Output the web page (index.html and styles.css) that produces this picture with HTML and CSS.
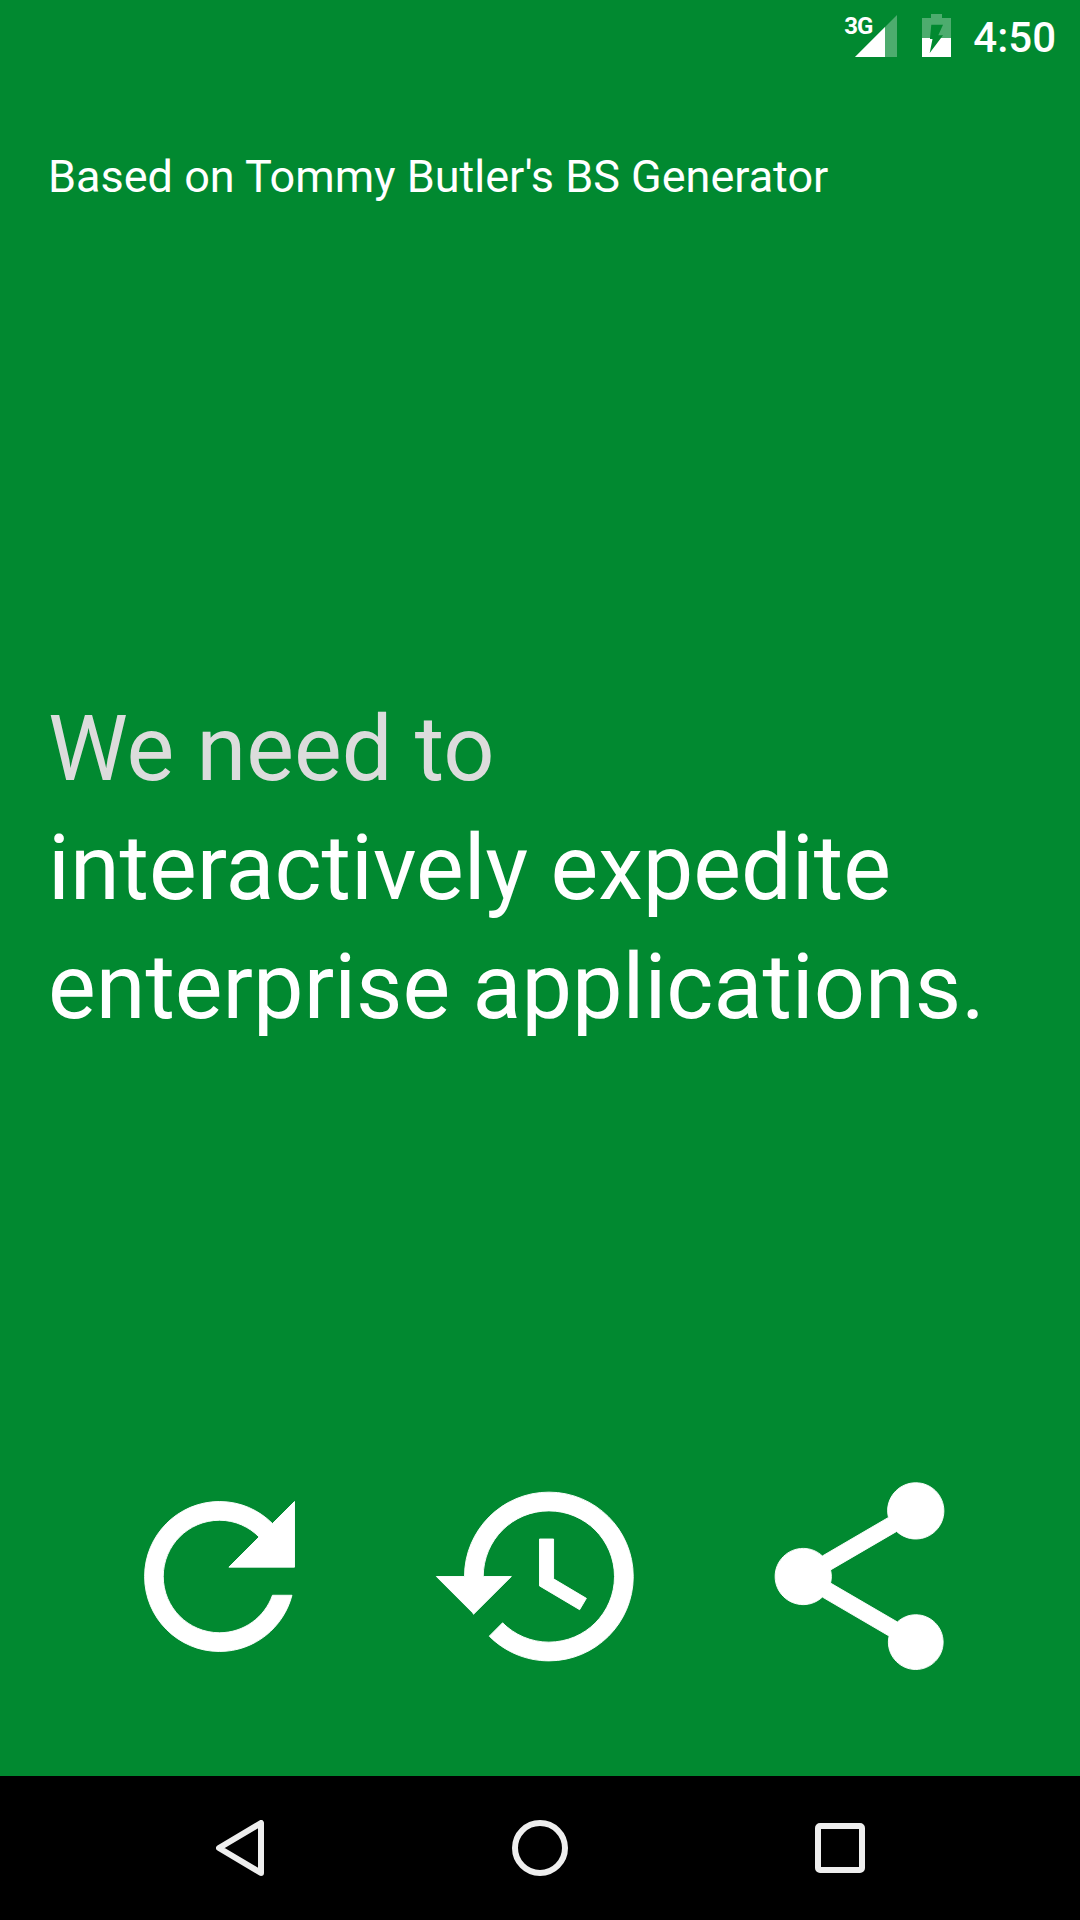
FILE: index.html
```html
<!DOCTYPE html>
<html lang="en">
<head>
<meta charset="utf-8">
<title>BS Generator</title>
<link rel="stylesheet" href="styles.css">
</head>
<body>
<div class="app">
  <header class="status">
    <div class="signal">
      <span class="net">3G</span>
      <svg class="signal-icon" viewBox="0 0 42 42" width="42" height="42"><path class="dim" d="M42 0V42H0Z"/><path d="M30 12V42H0Z"/></svg>
    </div>
    <svg class="battery" viewBox="0 0 29 43" width="29" height="43">
      <path class="dim" fill-rule="evenodd" d="M9 0H20V4H29V24H0V4H9ZM9.3 10.7H21L16.3 21.3H21L19 24H8Z"/>
      <path fill-rule="evenodd" d="M0 24H29V43H0ZM8 24H19L7.7 39L10.5 25H8Z"/>
    </svg>
    <span class="clock">4:50</span>
  </header>
  <p class="credit">Based on Tommy Butler's BS Generator</p>
  <main class="phrase">
    <div class="lead">We need to</div>
    <div class="body-line">interactively expedite</div>
    <div class="body-line">enterprise applications.</div>
  </main>
  <section class="actions">
    <svg class="action" viewBox="0 0 24 24"><path d="M17.65 6.35C16.2 4.9 14.21 4 12 4c-4.42 0-7.99 3.58-7.99 8s3.57 8 7.99 8c3.73 0 6.84-2.55 7.73-6h-2.08c-.82 2.33-3.04 4-5.65 4-3.31 0-6-2.69-6-6s2.69-6 6-6c1.66 0 3.14.69 4.22 1.78L13 11h7V4l-2.35 2.35z"/></svg>
    <svg class="action" viewBox="0 0 24 24"><path d="M13 3c-4.97 0-9 4.03-9 9H1l3.89 3.89.07.14L9 12H6c0-3.87 3.13-7 7-7s7 3.13 7 7-3.13 7-7 7c-1.93 0-3.68-.79-4.94-2.06l-1.42 1.42C8.27 19.99 10.51 21 13 21c4.97 0 9-4.03 9-9s-4.03-9-9-9zm-1 5v5l4.28 2.54.72-1.21-3.5-2.08V8H12z"/></svg>
    <svg class="action" viewBox="0 0 24 24"><path d="M18 16.08c-.76 0-1.44.3-1.96.77L8.91 12.7c.05-.23.09-.46.09-.7s-.04-.47-.09-.7l7.05-4.11c.54.5 1.25.81 2.04.81 1.66 0 3-1.34 3-3s-1.34-3-3-3-3 1.34-3 3c0 .24.04.47.09.7L8.04 9.81C7.5 9.31 6.79 9 6 9c-1.66 0-3 1.34-3 3s1.34 3 3 3c.79 0 1.5-.31 2.04-.81l7.12 4.16c-.05.21-.08.43-.08.65 0 1.61 1.31 2.92 2.92 2.92 1.61 0 2.92-1.31 2.92-2.92s-1.31-2.92-2.92-2.92z"/></svg>
  </section>
  <nav class="navbar">
    <svg class="nav-back" viewBox="0 0 48 56" width="48" height="56"><path d="M45 3V53L3 28Z"/></svg>
    <svg class="nav-home" viewBox="0 0 56 56" width="56" height="56"><circle cx="28" cy="28" r="25"/></svg>
    <svg class="nav-recent" viewBox="0 0 50 50" width="50" height="50"><rect x="3" y="3" width="44" height="44" rx="2"/></svg>
  </nav>
</div>
</body>
</html>
```

FILE: styles.css
```css
* { box-sizing: border-box; }
html, body { margin: 0; padding: 0; }
body { font-family: Roboto, "Liberation Sans", sans-serif; color: #fff; }
.app {
  width: 1080px;
  height: 1920px;
  background: #018930;
  display: flex;
  flex-direction: column;
}
.status {
  height: 72px;
  display: flex;
  align-items: flex-start;
  justify-content: flex-end;
  padding: 14px 24px 0 0;
}
.signal { position: relative; width: 52px; height: 44px; margin-right: 25px; padding: 1px 0 0 10px; }
.net {
  position: absolute;
  left: -1px;
  top: 0;
  font-size: 24px;
  line-height: 24px;
  font-weight: 700;
  letter-spacing: -1px;
}
.signal svg, .battery { fill: #fff; }
.dim { opacity: .3; }
.battery { margin-right: 22px; }
.clock { font-size: 42px; line-height: 33px; font-weight: 500; margin-top: 7px; }
.credit {
  margin: 80px 0 0;
  padding-left: 48px;
  font-size: 45px;
  line-height: 50px;
}
.phrase {
  margin-top: 488px;
  padding-left: 48px;
  font-size: 90px;
  line-height: 119px;
  height: 774px;
}
.lead { color: #dcdcdc; }
.actions {
  display: flex;
  justify-content: center;
  gap: 95px;
  height: 225px;
  padding-right: 1px;
}
.action { width: 225px; height: 225px; fill: #fff; stroke: #fff; stroke-width: .1; flex: none; }
.navbar {
  margin-top: auto;
  height: 144px;
  background: #000;
  position: relative;
  display: flex;
  align-items: flex-start;
  padding: 44px 0 0 216px;
}
.navbar svg { fill: none; stroke: #eee; stroke-width: 6; stroke-linejoin: round; }
.nav-back { margin-right: 248px; }
.nav-home { margin-right: 247px; }
.nav-recent { margin-top: 3px; }
```
